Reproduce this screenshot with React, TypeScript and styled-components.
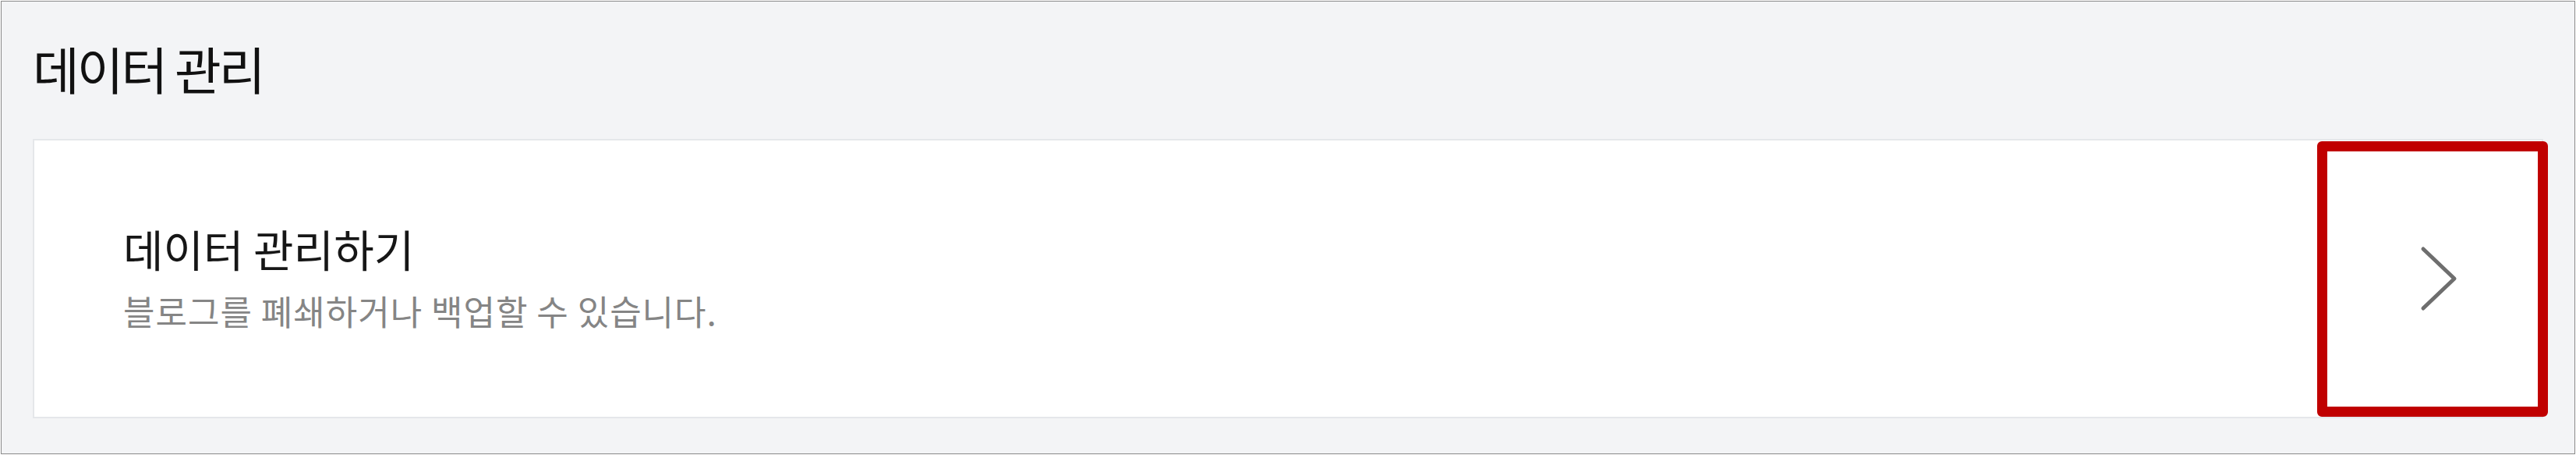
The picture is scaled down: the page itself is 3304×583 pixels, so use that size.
import React from 'react';
import styled, { createGlobalStyle } from 'styled-components';

const GlobalStyle = createGlobalStyle`
  html, body {
    margin: 0;
    padding: 0;
    background: #ffffff;
  }
  body {
    font-family: 'Noto Sans CJK KR', 'Noto Sans', sans-serif;
  }
`;

const Frame = styled.section`
  box-sizing: border-box;
  margin: 1px 0 0 1px;
  width: 3302px;
  height: 581px;
  border: 1px solid #8a8a8a;
  background-color: #f3f4f6;
  padding: 0 40px;
  display: flex;
  flex-direction: column;
`;

const SectionTitle = styled.h2`
  margin: 0;
  height: 176px;
  display: flex;
  align-items: center;
  padding-bottom: 6px;
  box-sizing: border-box;
  font-size: 65px;
  font-weight: 400;
  color: #111111;
  letter-spacing: -3px;
`;

const Card = styled.div`
  position: relative;
  box-sizing: border-box;
  height: 358px;
  background-color: #ffffff;
  border: 2px solid #e5e7ea;
  display: flex;
  align-items: center;
  justify-content: space-between;
  padding: 0 108px 0 114px;
`;

const TextBlock = styled.div`
  display: flex;
  flex-direction: column;
  gap: 30px;
  margin-top: -4px;
`;

const ItemTitle = styled.div`
  font-size: 56px;
  line-height: 1;
  color: #161616;
  letter-spacing: 0;
`;

const ItemDescription = styled.div`
  font-size: 44px;
  line-height: 1;
  color: #858585;
  letter-spacing: 1px;
`;

const Chevron = styled.svg`
  width: 48px;
  height: 84px;
  display: block;
`;

const Highlight = styled.div`
  position: absolute;
  top: 1px;
  right: -8px;
  bottom: 0;
  width: 296px;
  box-sizing: border-box;
  border: 13px solid #c00000;
  border-radius: 6px;
  pointer-events: none;
`;

const App: React.FC = () => {
  return (
    <>
      <GlobalStyle />
      <Frame>
        <SectionTitle>데이터 관리</SectionTitle>
        <Card>
          <TextBlock>
            <ItemTitle>데이터 관리하기</ItemTitle>
            <ItemDescription>블로그를 폐쇄하거나 백업할 수 있습니다.</ItemDescription>
          </TextBlock>
          <Chevron viewBox="0 0 48 84" fill="none">
            <polyline
              points="4,4 44,42 4,80"
              stroke="#6e6e6e"
              strokeWidth="5"
              strokeLinecap="round"
              strokeLinejoin="round"
            />
          </Chevron>
          <Highlight />
        </Card>
      </Frame>
    </>
  );
};

export default App;
